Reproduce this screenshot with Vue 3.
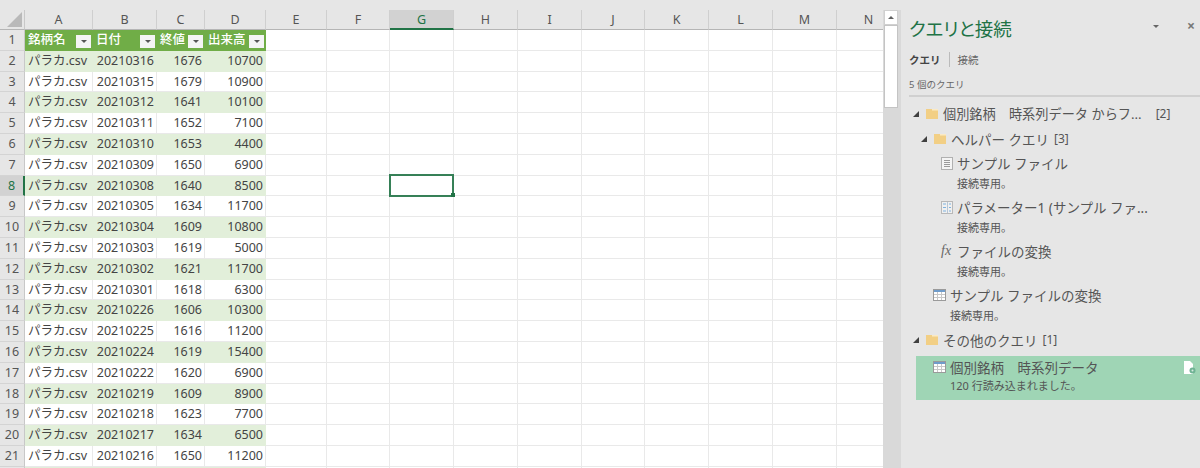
<script setup>
const columns = ['A', 'B', 'C', 'D', 'E', 'F', 'G', 'H', 'I', 'J', 'K', 'L', 'M', 'N'];
const headers = ['銘柄名', '日付', '終値', '出来高'];
const stocks = [
  ['20210316', 1676, 10700],
  ['20210315', 1679, 10900],
  ['20210312', 1641, 10100],
  ['20210311', 1652, 7100],
  ['20210310', 1653, 4400],
  ['20210309', 1650, 6900],
  ['20210308', 1640, 8500],
  ['20210305', 1634, 11700],
  ['20210304', 1609, 10800],
  ['20210303', 1619, 5000],
  ['20210302', 1621, 11700],
  ['20210301', 1618, 6300],
  ['20210226', 1606, 10300],
  ['20210225', 1616, 11200],
  ['20210224', 1619, 15400],
  ['20210222', 1620, 6900],
  ['20210219', 1609, 8900],
  ['20210218', 1623, 7700],
  ['20210217', 1634, 6500],
  ['20210216', 1650, 11200],
];
const emptyColumns = columns.slice(4);
</script>

<template>
  <div class="app">
    <div class="sheet">
      <div class="row head-row">
        <div class="corner"><span class="corner-mark"></span></div>
        <div
          v-for="col in columns"
          :key="col"
          class="col-head"
          :class="[`w-${col}`, { 'is-active': col === 'G' }]"
        >{{ col }}</div>
      </div>

      <div class="row">
        <div class="row-head">1</div>
        <div v-for="(h, i) in headers" :key="h" class="cell title" :class="`w-${columns[i]}`">
          <span>{{ h }}</span>
          <span class="filter"><i></i></span>
        </div>
        <div v-for="col in emptyColumns" :key="col" class="cell" :class="`w-${col}`"></div>
      </div>

      <div v-for="(s, i) in stocks" :key="s[0]" class="row" :class="{ band: i % 2 === 0 }">
        <div class="row-head" :class="{ 'is-active': i === 6 }">{{ i + 2 }}</div>
        <div class="cell w-A name">パラカ.csv</div>
        <div class="cell w-B num">{{ s[0] }}</div>
        <div class="cell w-C num">{{ s[1] }}</div>
        <div class="cell w-D num">{{ s[2] }}</div>
        <div
          v-for="col in emptyColumns"
          :key="col"
          class="cell"
          :class="[`w-${col}`, { selected: i === 6 && col === 'G' }]"
        ></div>
      </div>

      <!-- row 22 only peeks in at the bottom edge, its label is out of view -->
      <div class="row band">
        <div class="row-head"></div>
        <div class="cell w-A"></div>
        <div class="cell w-B"></div>
        <div class="cell w-C"></div>
        <div class="cell w-D"></div>
        <div v-for="col in emptyColumns" :key="col" class="cell" :class="`w-${col}`"></div>
      </div>
    </div>

    <div class="scrollbar">
      <div class="scroll-btn"><i></i></div>
      <div class="scroll-thumb"></div>
    </div>

    <aside class="panel">
      <header class="panel-head">
        <h1>クエリと接続</h1>
        <span class="panel-menu"></span>
        <span class="panel-close">×</span>
      </header>
      <nav class="tabs">
        <span class="tab on">クエリ</span>
        <span class="tab">接続</span>
      </nav>
      <div class="count">5 個のクエリ</div>

      <div class="tree">
        <div class="group lv0">
          <span class="arrow"></span>
          <svg class="folder" width="12" height="10" viewBox="0 0 12 10"><path d="M0 0h12v10H0z" fill="#f2cf85" /><path d="M6 0h6v1.5H6z" fill="#fbeac4" /></svg>
          <span class="group-name narrow">個別銘柄　時系列データ からフ...</span>
          <span class="badge far">[2]</span>
        </div>
        <div class="group lv1">
          <span class="arrow"></span>
          <svg class="folder" width="12" height="10" viewBox="0 0 12 10"><path d="M0 0h12v10H0z" fill="#f2cf85" /><path d="M6 0h6v1.5H6z" fill="#fbeac4" /></svg>
          <span class="group-name">ヘルパー クエリ</span>
          <span class="badge">[3]</span>
        </div>

        <div class="query lv2">
          <div class="query-main">
            <svg class="qicon" width="12" height="13" viewBox="0 0 12 13"><rect x=".5" y=".5" width="11" height="12" fill="#f4f4f4" stroke="#b0b0b0" /><path d="M3 3.5h6M3 5.5h6M3 7.5h6M3 9.5h6" stroke="#9a9a9a" /></svg>
            <span class="query-name">サンプル ファイル</span>
          </div>
          <div class="query-sub">接続専用。</div>
        </div>
        <div class="query lv2">
          <div class="query-main">
            <svg class="qicon" width="12" height="13" viewBox="0 0 12 13"><rect x=".5" y=".5" width="11" height="12" fill="#f0f0f0" stroke="#b8b8b8" /><path d="M6.5 1v11" stroke="#b6c6d6" /><path d="M2 3h3M2 6.5h3M2 10h3" stroke="#7fb2de" /><path d="M8 3h2M8 6.5h2M8 10h2" stroke="#7fb2de" /></svg>
            <span class="query-name narrow">パラメーター1 (サンプル ファ...</span>
          </div>
          <div class="query-sub">接続専用。</div>
        </div>
        <div class="query lv2">
          <div class="query-main">
            <span class="qicon fx">fx</span>
            <span class="query-name">ファイルの変換</span>
          </div>
          <div class="query-sub">接続専用。</div>
        </div>
        <div class="query lv1b">
          <div class="query-main">
            <svg class="qicon" width="13" height="12" viewBox="0 0 13 12"><rect x=".5" y=".5" width="12" height="11" fill="#fff" stroke="#9a9a9a" /><path d="M1 1h11v2H1z" fill="#6f9ccb" /><path d="M1 5.5h11M1 8.5h11M4.5 3v8M8.5 3v8" stroke="#c8c8c8" /></svg>
            <span class="query-name">サンプル ファイルの変換</span>
          </div>
          <div class="query-sub">接続専用。</div>
        </div>

        <div class="group lv0">
          <span class="arrow"></span>
          <svg class="folder" width="12" height="10" viewBox="0 0 12 10"><path d="M0 0h12v10H0z" fill="#f2cf85" /><path d="M6 0h6v1.5H6z" fill="#fbeac4" /></svg>
          <span class="group-name">その他のクエリ</span>
          <span class="badge">[1]</span>
        </div>

        <div class="query picked">
          <div class="query-main">
            <svg class="qicon" width="13" height="12" viewBox="0 0 13 12"><rect x=".5" y=".5" width="12" height="11" fill="#fff" stroke="#9a9a9a" /><path d="M1 1h11v2H1z" fill="#6f9ccb" /><path d="M1 5.5h11M1 8.5h11M4.5 3v8M8.5 3v8" stroke="#c8c8c8" /></svg>
            <span class="query-name">個別銘柄　時系列データ</span>
          </div>
          <div class="query-sub">120 行読み込まれました。</div>
          <svg class="sheet-icon" width="12" height="13" viewBox="0 0 12 13"><path d="M0 0h6l3 3v10H0z" fill="#fff" /><circle cx="8.5" cy="9.5" r="3" fill="#6fb394" /><circle cx="8.5" cy="9.5" r="1" fill="#d7ebe1" /></svg>
        </div>
      </div>
    </aside>
  </div>
</template>

<style>
html,
body {
  margin: 0;
  background: #e6e6e6;
}
</style>

<style scoped>
.app {
  display: flex;
  width: 1200px;
  height: 468px;
  padding-top: 10px;
  box-sizing: border-box;
  overflow: hidden;
  background: #e6e6e6;
  font-family: "Noto Sans", "Noto Sans CJK JP", sans-serif;
  color: #444;
}

/* sheet */
.sheet {
  width: 883px;
  flex: none;
  background: #fff;
  overflow: hidden;
}
.row {
  display: flex;
  height: 20.8px;
}
.head-row {
  height: 20px;
}
.corner {
  width: 25px;
  flex: none;
  background: #e6e6e6;
  border-right: 1px solid #c8c8c8;
  border-bottom: 1px solid #b5b5b5;
  box-sizing: border-box;
  position: relative;
}
.corner-mark {
  position: absolute;
  right: 2px;
  bottom: 2px;
  border-style: solid;
  border-width: 0 0 15px 15px;
  border-color: transparent transparent #b9b9b9 transparent;
}
.col-head {
  flex: none;
  box-sizing: border-box;
  background: #e6e6e6;
  border-right: 1px solid #cfcfcf;
  border-bottom: 1px solid #b5b5b5;
  text-align: center;
  font-size: 12.5px;
  line-height: 19px;
  color: #555;
}
.col-head.is-active {
  background: #d2d2d2;
  border-bottom: 2px solid #217346;
  color: #217346;
}
.row-head {
  width: 25px;
  flex: none;
  box-sizing: border-box;
  background: #e6e6e6;
  border-right: 1px solid #c8c8c8;
  border-bottom: 1px solid #d4d4d4;
  text-align: center;
  font-size: 12.5px;
  line-height: 20px;
  color: #555;
}
.row-head.is-active {
  background: #d2d2d2;
  border-right: 2px solid #217346;
  color: #217346;
}
.cell {
  flex: none;
  box-sizing: border-box;
  border-right: 1px solid #e9e9e9;
  border-bottom: 1px solid #e9e9e9;
  font-size: 12.5px;
  line-height: 20px;
  white-space: nowrap;
  overflow: hidden;
  position: relative;
}
.w-A { width: 68px; }
.w-B { width: 64px; }
.w-C { width: 48px; }
.w-D { width: 61px; }
.w-E { width: 61px; }
.w-F { width: 63px; }
.w-G { width: 64px; }
.w-H { width: 64px; }
.w-I { width: 64px; }
.w-J { width: 63px; }
.w-K { width: 64px; }
.w-L { width: 64px; }
.w-M { width: 64px; }
.w-N { width: 64px; }

.band .w-A,
.band .w-B,
.band .w-C,
.band .w-D {
  background: #e2efda;
  border-color: #e2efda;
}
.name {
  padding-left: 3px;
}
.num {
  text-align: right;
  padding-right: 2px;
}
.title {
  background: #70ad47;
  border-color: #70ad47;
  color: #fff;
  font-weight: 500;
  padding-left: 3px;
}
.filter {
  position: absolute;
  right: 1px;
  bottom: 2px;
  width: 15px;
  height: 13px;
  background: #f4f4f4;
  display: flex;
  align-items: center;
  justify-content: center;
}
.filter i {
  border-style: solid;
  border-width: 3px 3px 0;
  border-color: #555 transparent transparent;
  margin-top: 1px;
}
.selected {
  overflow: visible;
  z-index: 1;
}
.selected::before {
  content: "";
  position: absolute;
  left: -1px;
  top: -2px;
  width: 65px;
  height: 23px;
  box-sizing: border-box;
  border: 2px solid #217346;
  opacity: 0.9;
}
.selected::after {
  content: "";
  position: absolute;
  right: -2px;
  bottom: -2px;
  width: 4px;
  height: 4px;
  background: #217346;
}

/* scrollbar */
.scrollbar {
  width: 18px;
  flex: none;
  padding-left: 1px;
  background: #d9d9d9;
  box-sizing: border-box;
}
.scroll-btn {
  width: 14px;
  height: 15px;
  background: #fff;
  border: 1px solid #d0d0d0;
  box-sizing: border-box;
  display: flex;
  align-items: center;
  justify-content: center;
}
.scroll-btn i {
  border-style: solid;
  border-width: 0 3px 3px;
  border-color: transparent transparent #606060;
}
.scroll-thumb {
  width: 14px;
  height: 83px;
  background: #fff;
  border: 1px solid #c4c4c4;
  box-sizing: border-box;
}

/* panel */
.panel {
  flex: 1;
  min-width: 0;
  margin-top: -10px;
  background: #e6e6e6;
  padding-left: 8px;
  font-size: 13px;
}
.panel-head {
  display: flex;
  align-items: center;
  height: 56px;
  position: relative;
}
.panel-head h1 {
  margin: 0;
  font-size: 18.5px;
  font-weight: 400;
  color: #217346;
  font-feature-settings: "palt";
}
.panel-menu {
  position: absolute;
  left: 244px;
  top: 25px;
  border-style: solid;
  border-width: 3px 3px 0;
  border-color: #666 transparent transparent;
}
.panel-close {
  position: absolute;
  left: 278px;
  top: 16px;
  font-size: 14px;
  line-height: 20px;
  font-weight: 700;
  color: #777;
}
.tabs {
  display: flex;
  align-items: center;
  height: 16px;
  margin-top: -5px;
}
.tab {
  font-size: 10.5px;
  color: #666;
}
.tab.on {
  font-weight: 700;
  color: #444;
  padding-right: 8px;
  margin-right: 8px;
  border-right: 1px solid #bbb;
}
.count {
  margin-top: 11px;
  font-size: 9.5px;
  line-height: 14px;
  height: 17px;
  color: #666;
  border-bottom: 2px solid #d0d0d0;
}
.tree {
  margin-top: 4px;
}
.group {
  display: flex;
  align-items: center;
  height: 25px;
  white-space: nowrap;
}
.lv0 {
  padding-left: 4px;
}
.lv1 {
  padding-left: 12px;
}
.arrow {
  width: 0;
  height: 0;
  border-style: solid;
  border-width: 0 0 6px 6px;
  border-color: transparent transparent #404040;
  margin-right: 7px;
  flex: none;
}
.folder {
  flex: none;
  margin-right: 5px;
}
.group-name {
  font-size: 13.5px;
  color: #555;
}
.narrow {
  font-size: 13.2px;
}
.badge {
  margin-left: 5px;
  font-size: 12px;
  color: #555;
}
.badge.far {
  margin-left: 14px;
}
.query {
  position: relative;
  white-space: nowrap;
}
.lv2 {
  padding-left: 32px;
  height: 44px;
}
.lv1b {
  padding-left: 24px;
  height: 44px;
}
.query-main {
  display: flex;
  align-items: center;
  height: 24px;
}
.qicon {
  flex: none;
  margin-right: 4px;
}
.fx {
  width: 12px;
  font-family: "Liberation Serif", serif;
  font-style: italic;
  font-size: 14px;
  color: #666;
}
.query-name {
  font-size: 13.5px;
  color: #555;
}
.query-sub {
  padding-top: 1px;
  padding-left: 16px;
  font-size: 11px;
  line-height: 16px;
  color: #555;
}
.lv1b .query-sub,
.picked .query-sub {
  padding-left: 17px;
}
.picked {
  margin-top: 4px;
  margin-left: 7px;
  padding-left: 17px;
  height: 44px;
  background: #9fd5b5;
}
.picked .query-main {
  height: 21px;
}
.sheet-icon {
  position: absolute;
  right: 4px;
  top: 5px;
}
</style>
